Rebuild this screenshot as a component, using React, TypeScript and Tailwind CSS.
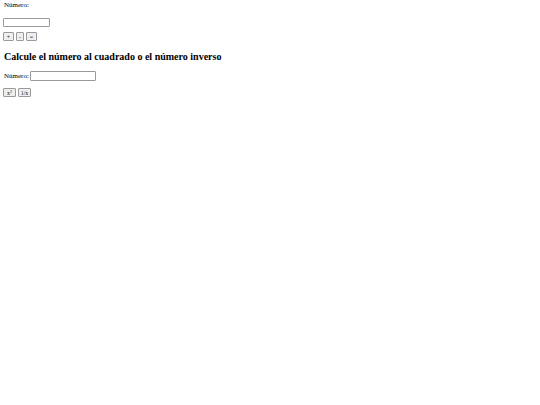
import React from "react";

const btn =
  "h-[9px] flex items-center justify-center border border-[#9a9a9a] rounded-[1px] bg-[#efefef] text-[6px] leading-none text-[#222]";

export default function App() {
  return (
    <div className="w-[540px] h-[405px] bg-white text-black px-[3px] pt-[1px] text-[7px]" style={{ fontFamily: '"Liberation Serif", "Times New Roman", serif' }}>
      <div className="leading-[9px] pl-[1px]">Número:</div>
      <div className="mt-[8px] w-[47px] h-[9px] border border-[#9a9a9a] rounded-[1px] bg-white" />
      <div className="mt-[5px] flex gap-[2px]">
        <div className={btn + " w-[11px]"}>+</div>
        <div className={btn + " w-[8px]"}>-</div>
        <div className={btn + " w-[11px]"}>=</div>
      </div>
      <h3 className="mt-[10px] pl-[1px] text-[10px] font-bold leading-[12px]">
        Calcule el número al cuadrado o el número inverso
      </h3>
      <div className="mt-[8px] flex items-center gap-[1px] pl-[1px] leading-[10px]">
        <span>Número:</span>
        <div className="w-[66px] h-[10px] border border-[#9a9a9a] rounded-[1px] bg-white" />
      </div>
      <div className="mt-[7px] flex gap-[2px]">
        <div className={btn + " w-[13px]"}>
          x<sup className="text-[4px] relative -top-[1px]">2</sup>
        </div>
        <div className={btn + " w-[13px]"}>1/x</div>
      </div>
    </div>
  );
}
